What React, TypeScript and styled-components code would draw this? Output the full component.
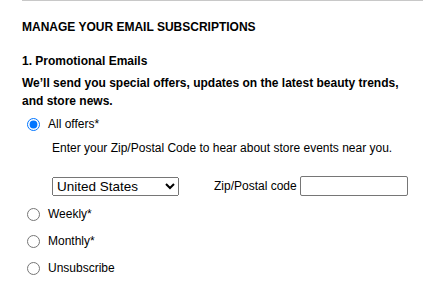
import { createGlobalStyle } from "styled-components";
import styled from "styled-components";

const GlobalStyle = createGlobalStyle`
  body {
    margin: 0;
    background: #fff;
    font-family: "Liberation Sans", Arial, sans-serif;
    color: #000;
  }
`;

const StPage = styled.div`
  padding: 0 7px 0 22px;
`;

const StSection = styled.section`
  border-top: 1px solid #c8c8c8;
  padding-top: 19px;
`;

const StHeading = styled.h2`
  margin: 0 0 20px;
  font-size: 12px;
  font-weight: 700;
  line-height: 14px;
`;

const StSubHeading = styled.h3`
  margin: 0 0 6px;
  font-size: 12px;
  font-weight: 700;
  line-height: 14px;
`;

const StIntro = styled.p`
  margin: 0 0 4px;
  font-size: 12px;
  font-weight: 700;
  line-height: 18px;
`;

const StOption = styled.label`
  display: flex;
  align-items: center;
  gap: 8px;
  padding-left: 5px;
  height: 20px;
  margin-bottom: 7px;
  font-size: 12px;
  line-height: 14px;
`;

const StRadio = styled.input`
  margin: 0;
  width: 13px;
  height: 13px;
`;

const StOffersBox = styled.div`
  padding-left: 30px;
  margin: -1px 0 8px;
`;

const StNote = styled.p`
  margin: 0 0 20px;
  font-size: 12px;
  line-height: 16px;
`;

const StZipRow = styled.div`
  display: flex;
  align-items: center;
  height: 20px;
`;

const StSelect = styled.select`
  width: 127px;
  height: 19px;
  font-family: inherit;
  font-size: 13.5px;
  margin-right: 35px;
`;

const StZipLabel = styled.label`
  font-size: 12px;
  margin-right: 3px;
`;

const StZipInput = styled.input`
  width: 108px;
  height: 20px;
  box-sizing: border-box;
  border: 1px solid #767676;
  border-radius: 2px;
  font-family: inherit;
`;

export default function App() {
  return (
    <>
      <GlobalStyle />
      <StPage>
        <StSection>
          <StHeading>MANAGE YOUR EMAIL SUBSCRIPTIONS</StHeading>
          <StSubHeading>1. Promotional Emails</StSubHeading>
          <StIntro>
            We’ll send you special offers, updates on the latest beauty trends,
            and store news.
          </StIntro>
          <StOption>
            <StRadio type="radio" name="freq" defaultChecked />
            All offers*
          </StOption>
          <StOffersBox>
            <StNote>
              Enter your Zip/Postal Code to hear about store events near you.
            </StNote>
            <StZipRow>
              <StSelect defaultValue="US">
                <option value="US">United States</option>
                <option value="CA">Canada</option>
              </StSelect>
              <StZipLabel htmlFor="zip">Zip/Postal code</StZipLabel>
              <StZipInput id="zip" type="text" />
            </StZipRow>
          </StOffersBox>
          <StOption>
            <StRadio type="radio" name="freq" />
            Weekly*
          </StOption>
          <StOption>
            <StRadio type="radio" name="freq" />
            Monthly*
          </StOption>
          <StOption>
            <StRadio type="radio" name="freq" />
            Unsubscribe
          </StOption>
        </StSection>
      </StPage>
    </>
  );
}
